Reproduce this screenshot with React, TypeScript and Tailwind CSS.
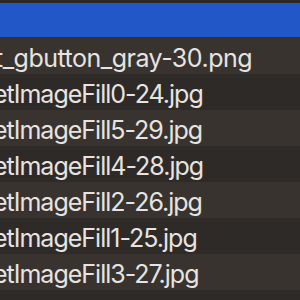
const files = [
  { name: "t_gbutton_gray-30.png", cls: "-ml-[5px] tracking-[-0.5px]" },
  { name: "etImageFill0-24.jpg", cls: "-ml-[7px] tracking-[-1px]" },
  { name: "etImageFill5-29.jpg", cls: "-ml-[7px] tracking-[-1px]" },
  { name: "etImageFill4-28.jpg", cls: "-ml-[7px] tracking-[-1px]" },
  { name: "etImageFill2-26.jpg", cls: "-ml-[7px] tracking-[-1px]" },
  { name: "etImageFill1-25.jpg", cls: "-ml-[7px] tracking-[-1px]" },
  { name: "etImageFill3-27.jpg", cls: "-ml-[7px] tracking-[-1px]" },
];

export default function App() {
  return (
    <div className="w-[300px] h-[300px] overflow-hidden bg-[#2e2a27] font-['Inter',sans-serif] text-[#e6e3e1]">
      <div className="h-[3px] bg-[#2d2927]" />
      <div className="h-[34px] bg-[#2257c7]" />
      <div className="h-[1px] bg-[#23304f]" />
      {files.map((f, i) => (
        <div
          key={f.name}
          className={`h-[36px] flex items-start pt-[8px] overflow-hidden ${i % 2 === 0 ? "bg-[#38332f]" : "bg-[#2e2a27]"}`}
        >
          <span className={`whitespace-nowrap text-[25px] leading-[25px] ${f.cls}`}>{f.name}</span>
        </div>
      ))}
      <div className="h-[36px] bg-[#2e2a27]" />
    </div>
  );
}
